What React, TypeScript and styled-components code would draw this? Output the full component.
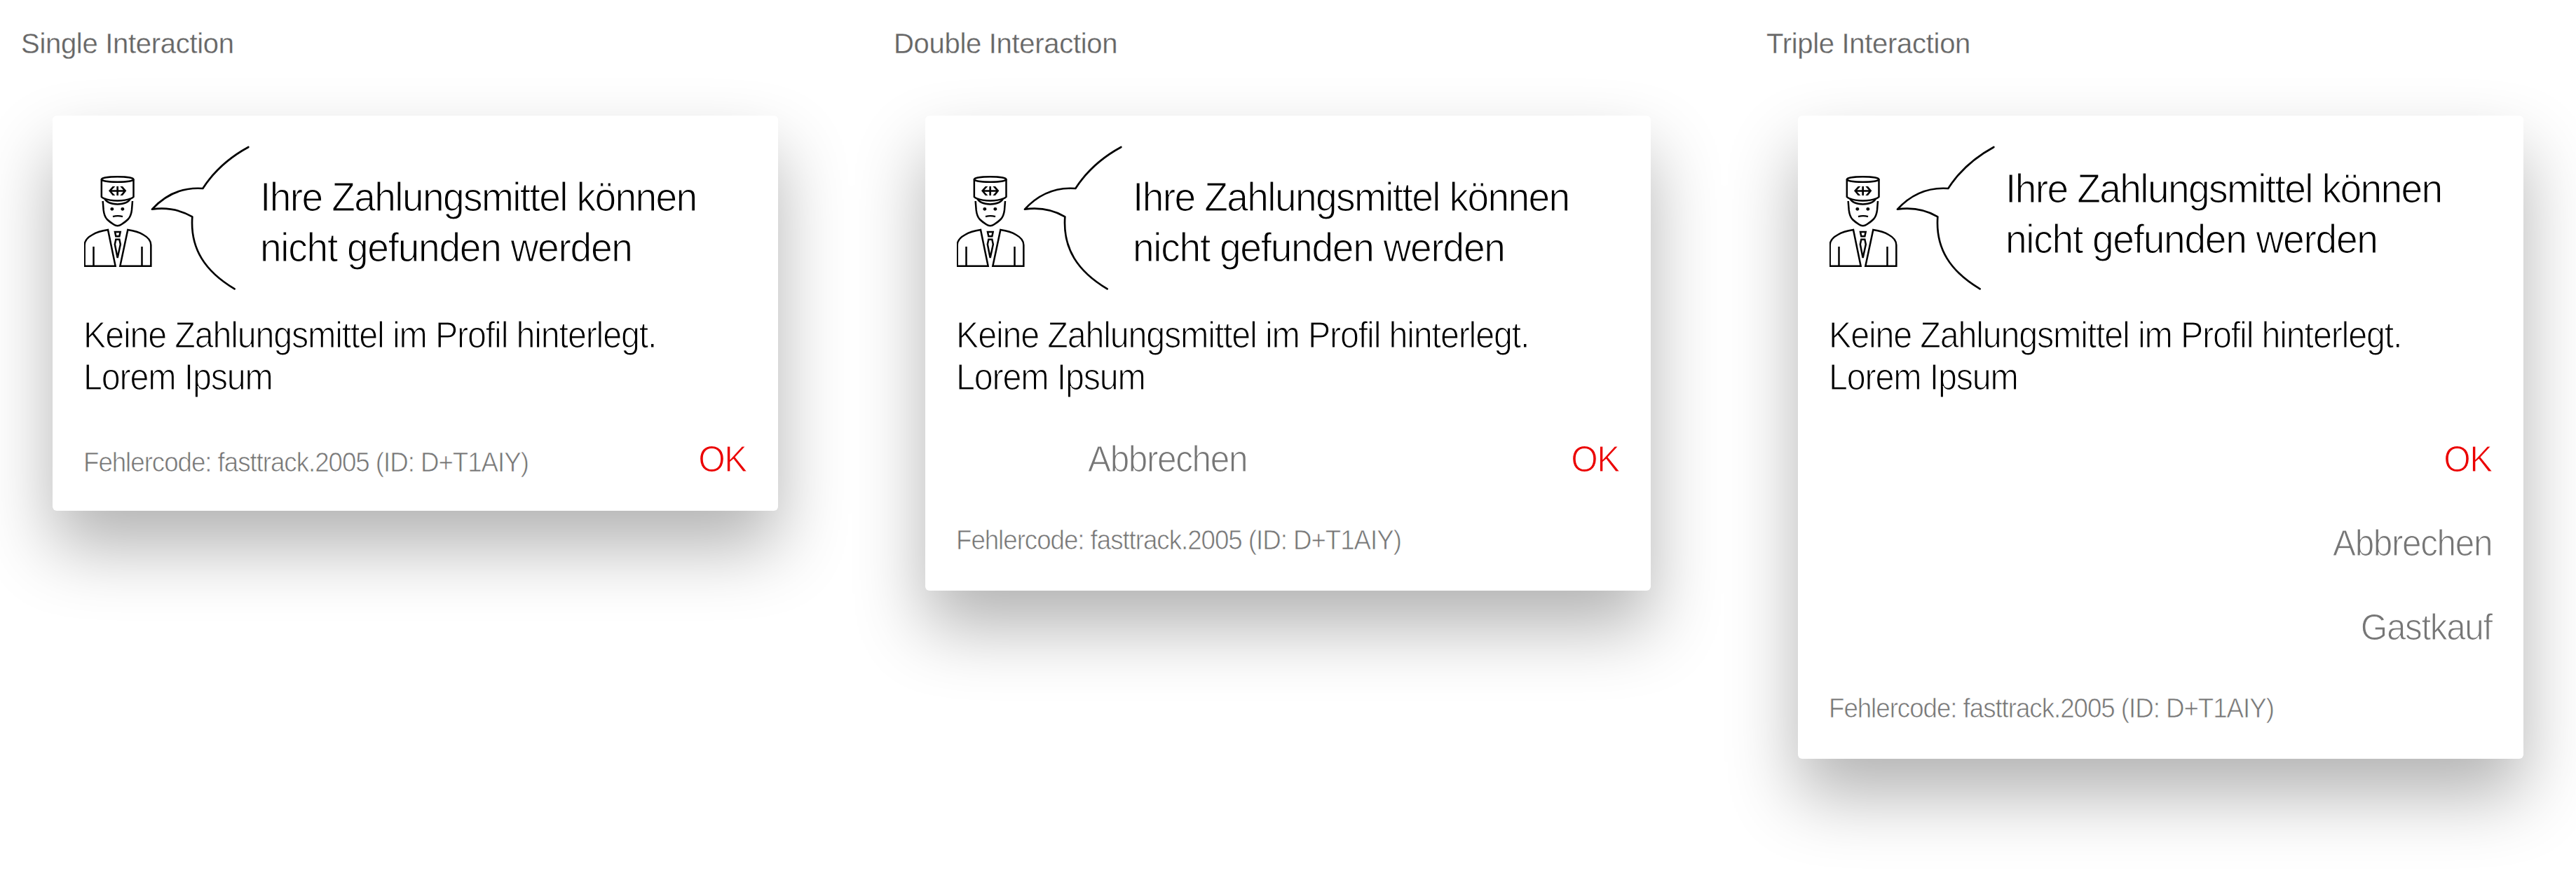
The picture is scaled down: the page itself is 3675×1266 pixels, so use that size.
import React from 'react';
import styled, { createGlobalStyle } from 'styled-components';

const GlobalStyle = createGlobalStyle`
  * { box-sizing: border-box; }
  body {
    margin: 0;
    background: #fff;
    font-family: "Liberation Sans", Arial, Helvetica, sans-serif;
    overflow: hidden;
  }
`;

const Board = styled.main`
  display: grid;
  grid-template-columns: repeat(3, 1245px);
  width: 3675px;
  height: 1266px;
  align-items: start;
  overflow: hidden;
`;

const Column = styled.section`
  padding: 32px 0 0 30px;
`;

const Label = styled.h2`
  margin: 0 0 73px;
  height: 60px;
  font-size: 40px;
  line-height: 60px;
  font-weight: 400;
  letter-spacing: -0.3px;
  color: #666;
  -webkit-text-stroke: 0.3px #fff;
  white-space: nowrap;
`;

const Card = styled.article<{ $bottom: number }>`
  display: flex;
  flex-direction: column;
  width: 1035px;
  margin-left: 45px;
  padding: 0 45px ${(p) => p.$bottom}px;
  border-radius: 6px;
  background: #fff;
  box-shadow: 0 52px 100px rgba(0, 0, 0, 0.3);
`;

const Header = styled.header`
  display: flex;
  height: 284px;
`;

const Illustration = styled.svg`
  display: block;
  flex: none;
  width: 240px;
  height: 210px;
  margin-top: 42px;
`;

/* Narrowed, thin face: the white outline trims the regular stems to a light weight. */
const lightText = (scale: number, trim: number) => `
  transform: scaleX(${scale});
  -webkit-text-stroke: ${trim}px #fff;
  font-weight: 400;
  white-space: nowrap;
`;

const Title = styled.h1<{ $top: number }>`
  margin: ${(p) => p.$top}px 0 0 11px;
  width: 660px;
  font-size: 58px;
  line-height: 72px;
  color: #000;
  transform-origin: left top;
  ${lightText(0.95, 1.2)}
`;

const TitleLine = styled.span<{ $tracking: number }>`
  display: block;
  letter-spacing: ${(p) => p.$tracking}px;
`;

const Message = styled.p`
  margin: 0 0 0 -1px;
  font-size: 51px;
  line-height: 60px;
  letter-spacing: -1.25px;
  color: #000;
  transform-origin: left top;
  ${lightText(0.95, 1.2)}
`;

const Footer = styled.div`
  display: flex;
  justify-content: space-between;
  align-items: flex-start;
  margin-top: 57px;
`;

const Actions = styled.div<{ $stacked: boolean }>`
  display: flex;
  flex-direction: ${(p) => (p.$stacked ? 'column' : 'row')};
  justify-content: flex-end;
  align-items: flex-end;
  gap: ${(p) => (p.$stacked ? 60 : 460)}px;
  margin-top: 57px;
`;

const Action = styled.button<{ $primary?: boolean }>`
  padding: 0;
  border: 0;
  background: none;
  font-family: inherit;
  font-size: 51px;
  line-height: 60px;
  letter-spacing: -1.4px;
  color: ${(p) => (p.$primary ? '#eb0000' : '#767676')};
  transform-origin: right top;
  ${lightText(0.97, 1.1)}
`;

const ErrorCode = styled.div<{ $top: number }>`
  margin: ${(p) => p.$top}px 0 0 -1px;
  font-size: 39px;
  line-height: 60px;
  letter-spacing: -1.08px;
  color: #767676;
  transform-origin: left top;
  ${lightText(0.94, 0.7)}
`;

const Conductor = () => (
  <Illustration viewBox="0 0 240 210" fill="none" stroke="#000">
    <g transform="translate(-20 23) scale(0.33333)" strokeWidth="7.5">
      <ellipse cx="203" cy="78" rx="68.5" ry="11.5" />
      <path d="M134.500 78V153Q138 157 146 160Q168 169 203 169.500Q238 169 260 160Q268 157 271.500 153V78" />
      <path d="M148 160Q158 184 203 184.500Q248 184 258 160" />
      <path
        d="M182 108H193L178 124H199V108H207V124H228L214 108H225L241 127L225 147H214L228 131H207V147H199V131H178L193 147H182L165 127Z"
        fill="#000"
        stroke="none"
      />
      <path d="M140 171L143 209Q146 236 158 249Q168 259 186 271Q203 283 220 271Q238 259 248 249Q261 236 264 209L267 171" />
      <g fill="#000" stroke="none">
        <circle cx="179.500" cy="205" r="7.300" />
        <circle cx="224.500" cy="205" r="7.300" />
      </g>
      <path d="M183 237.500Q204 231 225 237.500" strokeWidth="7" />
      <path d="M162 294Q120 300 96 315Q62 333 62 359V449H194Z" />
      <path d="M247 294Q289 300 313 315Q346 333 346 359V449H214Z" />
      <path d="M100.500 366V449M307.500 366V449" />
      <path d="M192 303H215L211 321.500H196Z" />
      <path d="M196 335H211L215.500 356L203 414L191.500 356Z" />
    </g>
    <g
      transform="translate(80 -17) scale(0.33333)"
      strokeWidth="8"
      strokeLinecap="round"
      strokeLinejoin="round"
    >
      <path d="M463 60Q338 128 268 237Q141 228 51 326Q145 313 223 358C213 495 278 592 404 667" />
    </g>
  </Illustration>
);

type Variant = 'single' | 'double' | 'triple';

const code = 'Fehlercode: fasttrack.2005 (ID: D+T1AIY)';

const Dialog = ({ variant }: { variant: Variant }) => (
  <Card $bottom={variant === 'single' ? 39 : 42}>
    <Header>
      <Conductor />
      <Title $top={variant === 'triple' ? 67.5 : 80}>
        <TitleLine $tracking={-1.7}>Ihre Zahlungsmittel können</TitleLine>
        <TitleLine $tracking={-1.35}>nicht gefunden werden</TitleLine>
      </Title>
    </Header>
    <Message>
      Keine Zahlungsmittel im Profil hinterlegt.
      <br />
      Lorem Ipsum
    </Message>
    {variant === 'single' && (
      <Footer>
        <ErrorCode $top={4}>{code}</ErrorCode>
        <Action $primary>OK</Action>
      </Footer>
    )}
    {variant === 'double' && (
      <Actions $stacked={false}>
        <Action>Abbrechen</Action>
        <Action $primary>OK</Action>
      </Actions>
    )}
    {variant === 'triple' && (
      <Actions $stacked>
        <Action $primary>OK</Action>
        <Action>Abbrechen</Action>
        <Action>Gastkauf</Action>
      </Actions>
    )}
    {variant !== 'single' && <ErrorCode $top={55}>{code}</ErrorCode>}
  </Card>
);

const examples: { label: string; variant: Variant }[] = [
  { label: 'Single Interaction', variant: 'single' },
  { label: 'Double Interaction', variant: 'double' },
  { label: 'Triple Interaction', variant: 'triple' },
];

export default function App() {
  return (
    <>
      <GlobalStyle />
      <Board>
        {examples.map((e) => (
          <Column key={e.variant}>
            <Label>{e.label}</Label>
            <Dialog variant={e.variant} />
          </Column>
        ))}
      </Board>
    </>
  );
}
